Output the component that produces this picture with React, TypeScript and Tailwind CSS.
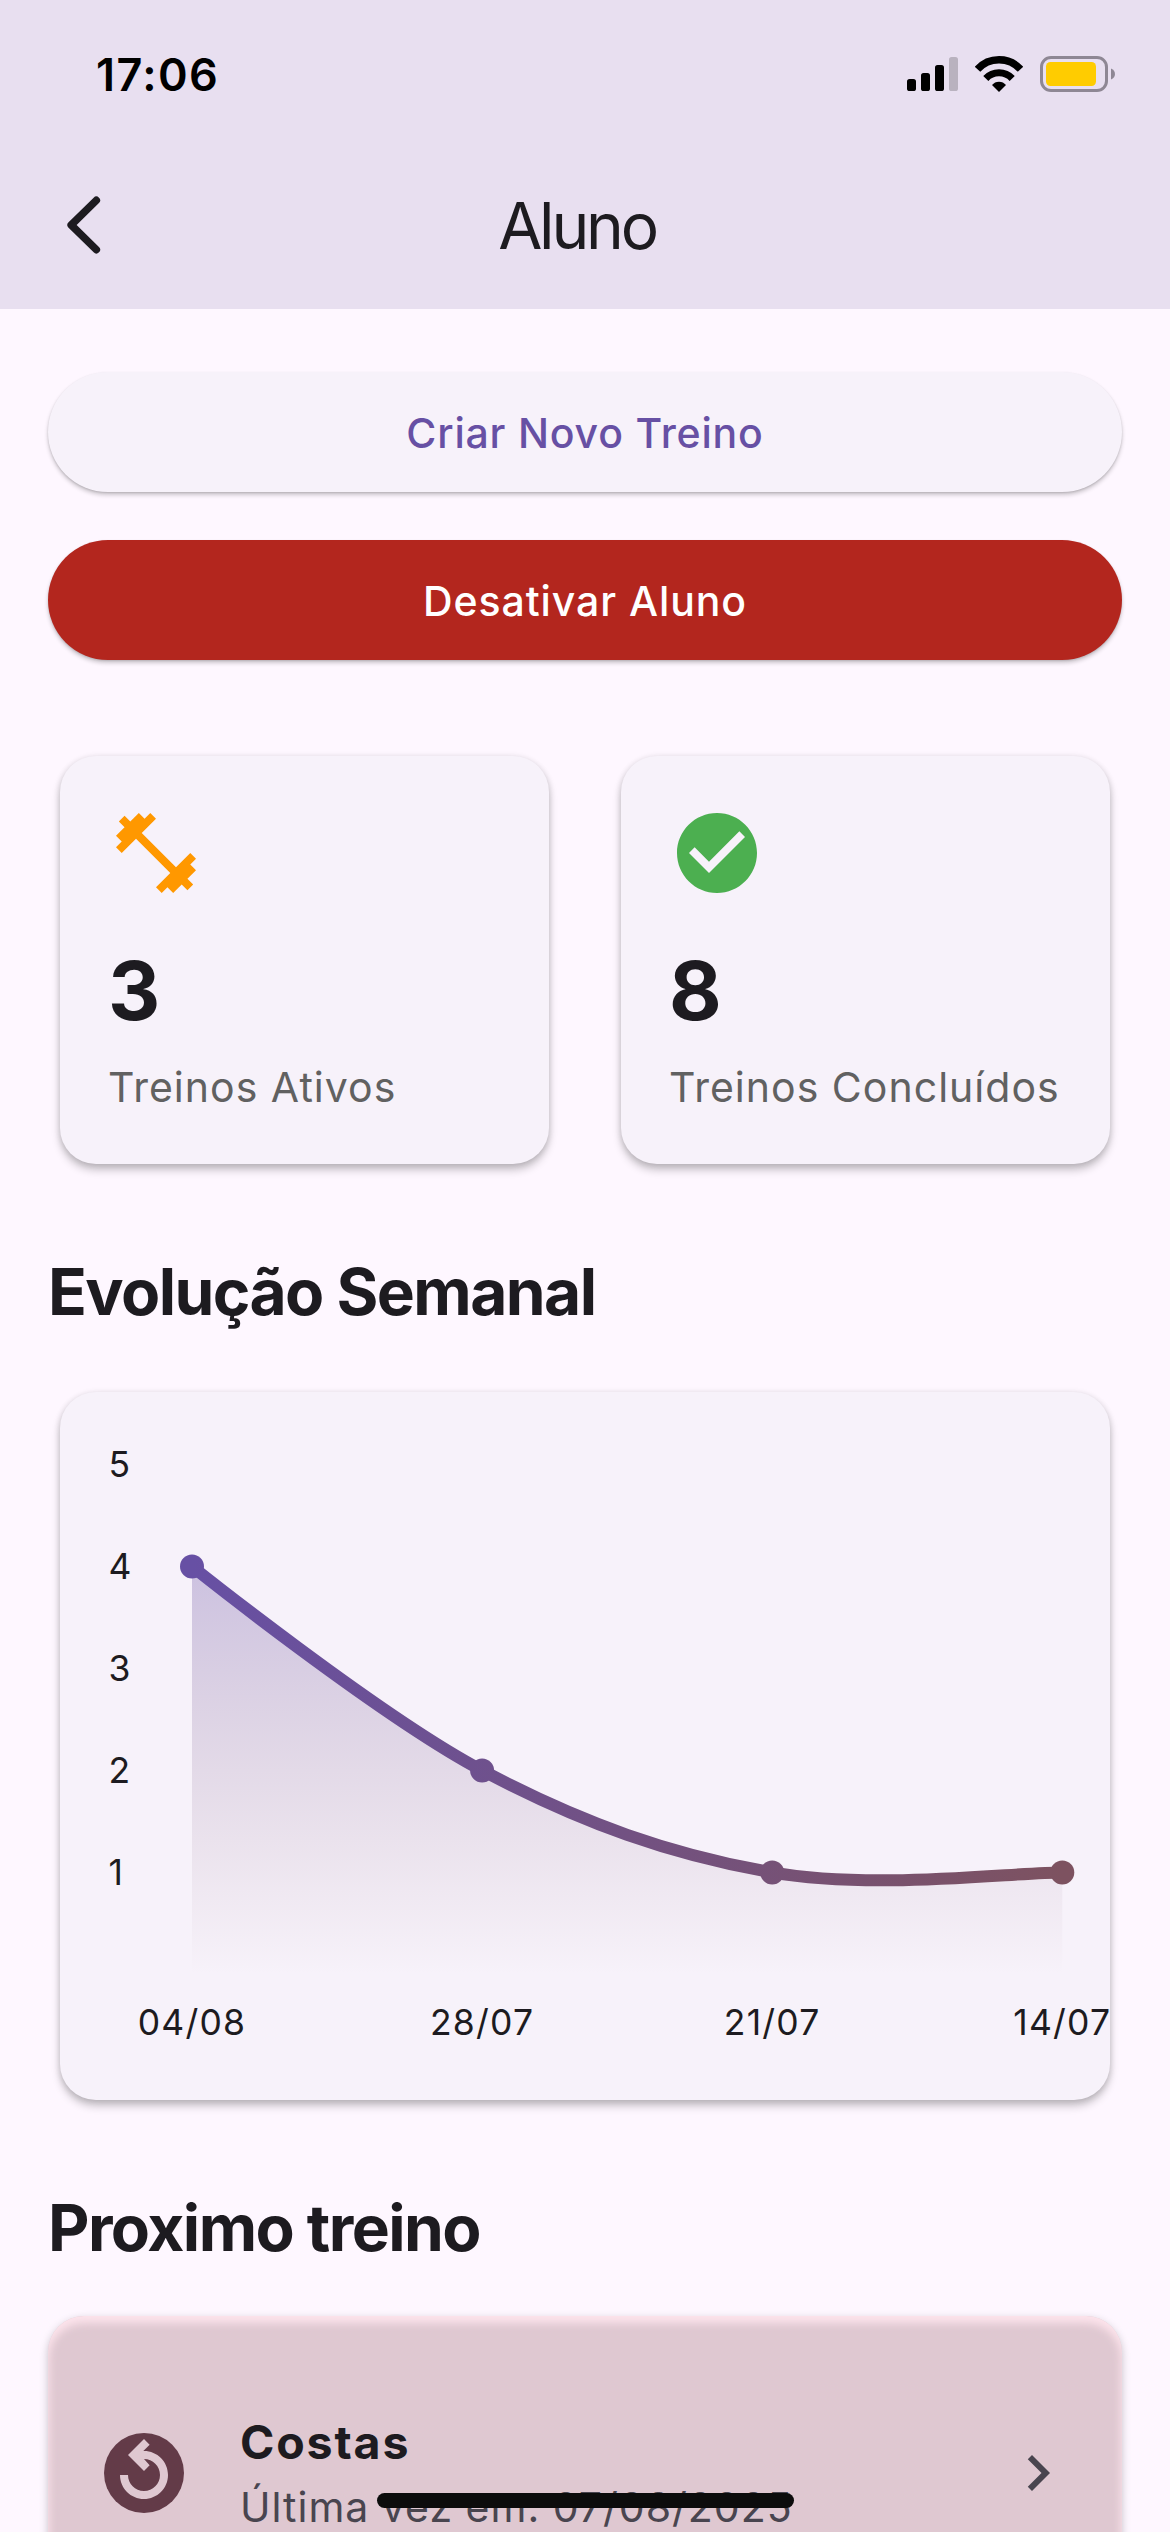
import React from 'react';
import { MdCheckCircle, MdChevronRight, MdFitnessCenter } from 'react-icons/md';

interface WeekPoint {
  label: string;
  value: number;
}

const WEEKS: WeekPoint[] = [
  { label: '04/08', value: 4 },
  { label: '28/07', value: 2 },
  { label: '21/07', value: 1 },
  { label: '14/07', value: 1 },
];

const CHART_LEFT = 132;
const CHART_BOTTOM = 582.4;
const STEP_X = 290.1;
const STEP_Y = 102;
const SMOOTHNESS = 0.35;

const toPoint = (p: WeekPoint, i: number) => ({
  x: CHART_LEFT + i * STEP_X,
  y: CHART_BOTTOM - p.value * STEP_Y,
});

// Cubic segments whose handles follow the direction of the neighbouring points
const buildLine = (weeks: WeekPoint[]) => {
  const pts = weeks.map(toPoint);
  let d = `M${pts[0].x} ${pts[0].y}`;
  let handle = { x: 0, y: 0 };
  for (let i = 1; i < pts.length; i++) {
    const prev = pts[i - 1];
    const cur = pts[i];
    const next = pts[i + 1] ?? cur;
    const c1 = { x: prev.x + handle.x, y: prev.y + handle.y };
    handle = {
      x: ((next.x - prev.x) / 2) * SMOOTHNESS,
      y: ((next.y - prev.y) / 2) * SMOOTHNESS,
    };
    d += ` C${c1.x} ${c1.y} ${cur.x - handle.x} ${cur.y - handle.y} ${cur.x} ${cur.y}`;
  }
  return d;
};

function StatusBar() {
  return (
    <div className="flex h-[141px] items-center justify-between pt-[7px] pl-24 pr-[54px]">
      <span className="text-[45px] leading-none font-semibold tracking-[1.4px] text-black">17:06</span>
      <div className="flex items-center">
        <svg width="51" height="34" viewBox="0 0 51 34">
          <rect x="0" y="22" width="9" height="12" rx="2.6" />
          <rect x="14" y="16" width="9" height="18" rx="2.6" />
          <rect x="28" y="8" width="9" height="26" rx="2.6" />
          <rect x="42" y="0" width="9" height="34" rx="2.6" fill="#b9b2bf" />
        </svg>
        <svg className="ml-[17px] -mt-px" width="48" height="36" viewBox="0 0 48 36">
          <path d="M2.5 13.3A29 29 0 0 1 45.5 13.3" fill="none" stroke="#000" strokeWidth="7.4" />
          <path d="M10.8 22.5A18.1 18.1 0 0 1 37.2 22.5" fill="none" stroke="#000" strokeWidth="7" />
          <path d="M24 36L17 29A9 9 0 0 1 31 29Z" />
        </svg>
        <svg className="ml-[17px]" width="76" height="36" viewBox="0 0 76 36">
          <rect x="1.5" y="1.5" width="65" height="33" rx="9.5" fill="none" stroke="#8e8794" strokeWidth="3" />
          <rect x="6" y="6" width="50" height="24" rx="4.5" fill="#ffcc00" />
          <path d="M71 12.5C76.3 14.5 76.3 21.5 71 23.5Z" fill="#8e8794" />
        </svg>
      </div>
    </div>
  );
}

function AppBar() {
  return (
    <header className="h-[309px] shrink-0 bg-[#e8dff0]">
      <StatusBar />
      <div className="flex h-[168px] items-center pr-[184px]">
        <button className="flex w-[168px] shrink-0 justify-center">
          <svg width="72" height="72" viewBox="0 0 72 72" fill="none">
            <path
              d="M48.3 11.4L23.2 36L48.3 60.6"
              stroke="#1d1b20"
              strokeWidth="7.6"
              strokeLinecap="round"
              strokeLinejoin="round"
            />
          </svg>
        </button>
        <h1 className="flex-1 pt-0.5 text-center text-[64px] leading-[84px] tracking-[-3.2px]">Aluno</h1>
      </div>
    </header>
  );
}

interface StatCardProps {
  icon: React.ReactNode;
  value: number;
  label: string;
}

function StatCard({ icon, value, label }: StatCardProps) {
  return (
    <div className="h-[408px] flex-1 rounded-[36px] bg-[#f7f2fa] px-12 pt-[49px] shadow-[0_6px_9px_rgba(0,0,0,0.22),0_1px_6px_rgba(0,0,0,0.12)]">
      {icon}
      <div className="mt-[35px] text-[81px] leading-[110px] font-bold">{value}</div>
      <div className="mt-1.5 text-[41px] leading-[70px] tracking-[1.02px] whitespace-nowrap text-[#616161]">{label}</div>
    </div>
  );
}

function WeeklyChart() {
  const line = buildLine(WEEKS);
  const lastX = CHART_LEFT + (WEEKS.length - 1) * STEP_X;
  return (
    <div className="mx-3 mt-[58.3px] h-[708px] rounded-[36px] bg-[#f7f2fa] shadow-[0_6px_9px_rgba(0,0,0,0.22),0_1px_6px_rgba(0,0,0,0.12)]">
      <svg className="overflow-visible" width="1050" height="708" viewBox="0 0 1050 708">
        <defs>
          <linearGradient id="line" gradientUnits="userSpaceOnUse" x1={CHART_LEFT} y1="0" x2={lastX} y2="0">
            <stop offset="0" stopColor="#6750a4" />
            <stop offset="1" stopColor="#7d5260" />
          </linearGradient>
          <linearGradient id="area" gradientUnits="userSpaceOnUse" x1="0" y1={CHART_BOTTOM - 4 * STEP_Y} x2="0" y2={CHART_BOTTOM}>
            <stop offset="0" stopColor="#6750a4" stopOpacity="0.3" />
            <stop offset="1" stopColor="#7d5260" stopOpacity="0" />
          </linearGradient>
        </defs>
        <path d={`${line} L${lastX} ${CHART_BOTTOM} L${CHART_LEFT} ${CHART_BOTTOM} Z`} fill="url(#area)" />
        <path d={line} fill="none" stroke="url(#line)" strokeWidth="12" />
        {WEEKS.map(toPoint).map((p, i) => (
          <circle key={i} cx={p.x} cy={p.y} r="12" fill="url(#line)" />
        ))}
        {[5, 4, 3, 2, 1].map(n => (
          <text key={n} x="48.5" y={CHART_BOTTOM - n * STEP_Y + 12.4} className="fill-[#1d1b20] text-[35.5px]">
            {n}
          </text>
        ))}
        {WEEKS.map((week, i) => (
          <text
            key={week.label}
            x={CHART_LEFT + i * STEP_X}
            y="643"
            textAnchor="middle"
            className="fill-[#1d1b20] text-[35.5px] tracking-[1.2px]"
          >
            {week.label}
          </text>
        ))}
      </svg>
    </div>
  );
}

function ReplayIcon() {
  return (
    <svg className="-mt-0.5 shrink-0" width="96" height="96" viewBox="0 0 24 24">
      <circle cx="12" cy="12" r="10" fill="#633b48" />
      <path
        d="M12 18.5c-3.31 0-6-2.69-6-6h2c0 2.21 1.79 4 4 4s4-1.79 4-4-1.79-4-4-4l1.41 1.59L12 11.5l-4-4 4-4 1.41 1.41-1.58 1.59H12c3.31 0 6 2.69 6 6s-2.69 6-6 6z"
        fill="#dfc8d1"
      />
    </svg>
  );
}

function NextWorkout() {
  return (
    <div className="mt-[46px] flex h-[314px] shrink-0 items-start rounded-[36px] bg-[#dfc8d1] px-12 pt-[92.5px] shadow-[0_3px_8px_rgba(0,0,0,0.22),inset_0_6px_8px_1px_#fde4ec]">
      <div className="flex w-full items-center">
        <ReplayIcon />
        <div className="ml-12 flex-1">
          <div className="text-[46.5px] leading-[66px] font-bold tracking-[1.85px]">Costas</div>
          <div className="text-[41px] leading-[64px] tracking-[1px] text-[#49454f]">Última vez em: 07/08/2025</div>
        </div>
        <MdChevronRight size={72} className="-mt-0.5 text-[#49454f]" />
      </div>
    </div>
  );
}

function App() {
  return (
    <div className="relative flex h-[2532px] w-[1170px] flex-col overflow-hidden bg-[#fef7ff] font-['Inter',sans-serif] text-[#1d1b20]">
      <AppBar />

      <main className="flex-1 overflow-hidden px-12 pt-[63.3px]">
        <div className="flex flex-col gap-12">
          <button className="h-[120px] rounded-full bg-[#f7f2fa] pt-0.5 text-[41px] font-medium tracking-[0.8px] text-[#6750a4] shadow-[0_3px_4px_rgba(0,0,0,0.2),0_1px_2px_rgba(0,0,0,0.12)]">
            Criar Novo Treino
          </button>
          <button className="h-[120px] rounded-full bg-[#b3261e] pt-0.5 text-[41px] font-medium tracking-[0.92px] text-white shadow-[0_3px_4px_rgba(0,0,0,0.2),0_1px_2px_rgba(0,0,0,0.12)]">
            Desativar Aluno
          </button>
        </div>

        <div className="mx-3 mt-24 flex gap-[72px]">
          <StatCard icon={<MdFitnessCenter size={96} className="text-[#ff9800]" />} value={3} label="Treinos Ativos" />
          <StatCard icon={<MdCheckCircle size={96} className="text-[#4caf50]" />} value={8} label="Treinos Concluídos" />
        </div>

        <h2 className="mt-[85.7px] text-[64px] leading-[84px] font-bold tracking-[-1.55px]">Evolução Semanal</h2>
        <WeeklyChart />

        <h2 className="mt-[86px] text-[64px] leading-[84px] font-bold tracking-[-1.55px]">Proximo treino</h2>
        <NextWorkout />
      </main>

      {/* Home indicator */}
      <div className="absolute bottom-6 left-[377px] h-[15px] w-[417px] rounded-full bg-[#0c0c0c]" />
    </div>
  );
}

export default App;
